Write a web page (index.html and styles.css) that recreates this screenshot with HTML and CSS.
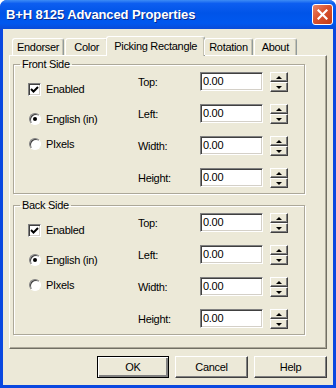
FILE: index.html
```html
<!DOCTYPE html>
<html lang="en">
<head>
  <meta charset="UTF-8">
  <title>B+H 8125 Advanced Properties</title>
  <link rel="stylesheet" href="styles.css">
</head>
<body>
  <div class="window">
    <!-- Title bar -->
    <div class="titlebar">
      <span class="title">B+H 8125 Advanced Properties</span>
      <div class="close">
        <svg width="11" height="11" viewBox="0 0 11 11">
          <path d="M1.5 1.5 L9.5 9.5 M9.5 1.5 L1.5 9.5" stroke="#fff" stroke-width="2.2" stroke-linecap="square"/>
        </svg>
      </div>
    </div>

    <div class="client">
      <!-- Tabs -->
      <div class="tabs">
        <div class="tab">Endorser</div>
        <div class="tab">Color</div>
        <div class="tab active">Picking Rectangle</div>
        <div class="tab">Rotation</div>
        <div class="tab">About</div>
      </div>

      <div class="panel">
        <fieldset class="group">
          <legend>Front Side</legend>
          <div class="group-body">
            <div class="options">
              <div class="option"><span class="checkbox"><svg width="9" height="9" viewBox="0 0 9 9"><path d="M1 4 L3.5 6.5 L8 2" stroke="#000" stroke-width="2" fill="none"/></svg></span>Enabled</div>
              <div class="option gap-big"><span class="radio on"></span>English (in)</div>
              <div class="option gap-small"><span class="radio"></span>PIxels</div>
            </div>
            <div class="fields">
              <span class="field-label">Top:</span><div class="input">0.00</div><div class="spin"><div class="spin-btn"><span class="arrow up"></span></div><div class="spin-btn"><span class="arrow down"></span></div></div>
              <span class="field-label">Left:</span><div class="input">0.00</div><div class="spin"><div class="spin-btn"><span class="arrow up"></span></div><div class="spin-btn"><span class="arrow down"></span></div></div>
              <span class="field-label">Width:</span><div class="input">0.00</div><div class="spin"><div class="spin-btn"><span class="arrow up"></span></div><div class="spin-btn"><span class="arrow down"></span></div></div>
              <span class="field-label">Height:</span><div class="input">0.00</div><div class="spin"><div class="spin-btn"><span class="arrow up"></span></div><div class="spin-btn"><span class="arrow down"></span></div></div>
            </div>
          </div>
        </fieldset>

        <fieldset class="group">
          <legend>Back Side</legend>
          <div class="group-body">
            <div class="options">
              <div class="option"><span class="checkbox"><svg width="9" height="9" viewBox="0 0 9 9"><path d="M1 4 L3.5 6.5 L8 2" stroke="#000" stroke-width="2" fill="none"/></svg></span>Enabled</div>
              <div class="option gap-big"><span class="radio on"></span>English (in)</div>
              <div class="option gap-small"><span class="radio"></span>PIxels</div>
            </div>
            <div class="fields">
              <span class="field-label">Top:</span><div class="input">0.00</div><div class="spin"><div class="spin-btn"><span class="arrow up"></span></div><div class="spin-btn"><span class="arrow down"></span></div></div>
              <span class="field-label">Left:</span><div class="input">0.00</div><div class="spin"><div class="spin-btn"><span class="arrow up"></span></div><div class="spin-btn"><span class="arrow down"></span></div></div>
              <span class="field-label">Width:</span><div class="input">0.00</div><div class="spin"><div class="spin-btn"><span class="arrow up"></span></div><div class="spin-btn"><span class="arrow down"></span></div></div>
              <span class="field-label">Height:</span><div class="input">0.00</div><div class="spin"><div class="spin-btn"><span class="arrow up"></span></div><div class="spin-btn"><span class="arrow down"></span></div></div>
            </div>
          </div>
        </fieldset>
      </div>

      <!-- Dialog buttons -->
      <div class="buttons">
        <div class="button default">OK</div>
        <div class="button">Cancel</div>
        <div class="button">Help</div>
      </div>
    </div>
  </div>
</body>
</html>
```

FILE: styles.css
```css
/* General reset */
* {
  margin: 0;
  padding: 0;
  box-sizing: border-box;
}

body {
  font-family: "Liberation Sans", Arial, sans-serif;
  font-size: 11px;
  letter-spacing: -0.3px;
  color: #000;
  background: #fff;
}

.window {
  width: 336px;
  height: 388px;
  display: flex;
  flex-direction: column;
  background: #0a48e0;
  border-radius: 7px 7px 0 0;
  overflow: hidden;
}

/* Title bar */
.titlebar {
  height: 29px;
  flex-shrink: 0;
  display: flex;
  align-items: center;
  justify-content: space-between;
  padding: 0 3px 0 6px;
  background: linear-gradient(to bottom, #3d8cf5 0%, #0d5ef0 12%, #0054e8 45%, #0058ef 80%, #0a4bd8 100%);
}

.title {
  color: #fff;
  font-weight: bold;
  font-size: 13px;
  letter-spacing: -0.1px;
  text-shadow: 1px 1px 0 #0a2a8c;
}

.close {
  width: 21px;
  height: 21px;
  border: 1px solid #fff;
  border-radius: 3px;
  background: linear-gradient(135deg, #e9866b 0%, #d9532f 45%, #c23b17 100%);
  display: flex;
  align-items: center;
  justify-content: center;
}

/* Dialog client area */
.client {
  flex: 1;
  margin: 0 3px 3px;
  background: #ece9d8;
  padding: 7px 6px 0;
  display: flex;
  flex-direction: column;
}

.tabs {
  display: flex;
  align-items: flex-end;
  height: 19px;
  padding-left: 3px;
  position: relative;
  z-index: 1;
}

.tab {
  height: 17px;
  min-width: 43px;
  padding: 0 4px;
  text-align: center;
  line-height: 16px;
  border: 1px solid #fff;
  border-right: 1px solid #919b9c;
  border-bottom: none;
  border-radius: 3px 3px 0 0;
  box-shadow: inset -1px 0 #c5c2b2;
  background: #ece9d8;
  margin-right: 1px;
}

.tab.active {
  height: 20px;
  line-height: 18px;
  padding: 0 7px;
  margin: 0 -1px -1px -3px;
}

.panel {
  height: 294px;
  border: 1px solid #fff;
  border-right-color: #716f64;
  border-bottom-color: #716f64;
  box-shadow: inset -1px -1px #aca899;
  padding: 2px 0 0 3px;
}

/* Group boxes */
.group {
  width: 292px;
  border: 1px solid #aca899;
  box-shadow: inset 1px 1px #fff, 1px 1px #fff;
  padding: 0 0 5px;
}

.group + .group {
  margin-top: 5px;
}

.group legend {
  margin-left: 6px;
  padding: 0 2px;
  line-height: 13px;
}

.group-body {
  display: flex;
  padding-top: 1px;
}

.options {
  width: 110px;
  margin-left: 14px;
  padding-top: 10px;
}

.option {
  height: 14px;
  display: flex;
  align-items: center;
  gap: 5px;
}

.option.gap-big {
  margin-top: 16px;
}

.option.gap-small {
  margin-top: 11px;
}

.checkbox {
  width: 13px;
  height: 13px;
  background: #fff;
  border: 1px solid;
  border-color: #808080 #fff #fff #808080;
  box-shadow: inset 1px 1px #404040, inset -1px -1px #d4d0c8;
  display: flex;
  align-items: center;
  justify-content: center;
}

.radio {
  width: 12px;
  height: 12px;
  margin-left: 1px;
  border-radius: 50%;
  background: #fff;
  border: 1px solid;
  border-color: #808080 #fff #fff #808080;
  box-shadow: inset 1px 1px #404040;
  display: flex;
  align-items: center;
  justify-content: center;
}

.radio.on::after {
  content: "";
  width: 4px;
  height: 4px;
  border-radius: 50%;
  background: #000;
}

/* Numeric fields */
.fields {
  display: grid;
  grid-template-columns: 62px 70px 18px;
  grid-auto-rows: 20px;
  row-gap: 12px;
  align-items: center;
}

.input {
  width: 63px;
  height: 19px;
  align-self: start;
  background: #fff;
  border: 1px solid;
  border-color: #808080 #fff #fff #808080;
  box-shadow: inset 1px 1px #404040, inset -1px -1px #d4d0c8;
  padding: 0 2px;
  line-height: 17px;
}

.spin {
  height: 20px;
  display: flex;
  flex-direction: column;
}

.spin-btn {
  height: 10px;
  background: #ece9d8;
  border: 1px solid;
  border-color: #fff #404040 #404040 #fff;
  box-shadow: inset -1px -1px #808080;
  display: flex;
  align-items: center;
  justify-content: center;
}

.arrow {
  width: 0;
  height: 0;
  border-left: 3px solid transparent;
  border-right: 3px solid transparent;
}

.arrow.up {
  border-bottom: 3px solid #000;
}

.arrow.down {
  border-top: 3px solid #000;
}

/* Bottom buttons */
.buttons {
  display: flex;
  justify-content: flex-end;
  gap: 6px;
  margin-top: 7px;
}

.button {
  width: 73px;
  height: 22px;
  border: 1px solid;
  border-color: #fff #404040 #404040 #fff;
  box-shadow: inset -1px -1px #808080;
  text-align: center;
  line-height: 20px;
}

.button.default {
  width: 72px;
  border: 1px solid #000;
  box-shadow: inset 1px 1px #fff, inset -2px -2px #808080;
}
```
